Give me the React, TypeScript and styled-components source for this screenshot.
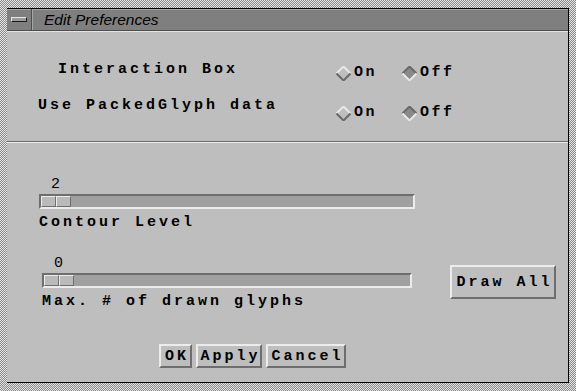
import React from 'react'
import styled, { createGlobalStyle } from 'styled-components'

const GlobalStyle = createGlobalStyle`
  html, body {
    margin: 0;
    padding: 0;
    background: #bebebe;
  }
  #root {
    width: 576px;
    height: 391px;
  }
`

const mono = `"Liberation Mono", "DejaVu Sans Mono", monospace`

const Frame = styled.div`
  box-sizing: border-box;
  width: 576px;
  height: 391px;
  padding: 8px 7px 8px 7px;
  background-color: #c0c0c0;
  background-image: repeating-conic-gradient(#8c8c8c 0 25%, #e2e2e2 0 50%);
  background-size: 2px 2px;
  display: flex;
`

const Inner = styled.div`
  flex: 1;
  display: flex;
  flex-direction: column;
  background: #bebebe;
  border-right: 1px solid #000;
  border-bottom: 1px solid #000;
  border-top: 1px solid #000;
`

const TitleBar = styled.div`
  height: 21px;
  display: flex;
  align-items: stretch;
  background: #7f7f7f;
  border-bottom: 1px solid #4e4e4e;
  box-shadow: inset 0 1px 0 #a6a6a6;
`

const MenuButton = styled.div`
  width: 24px;
  display: flex;
  align-items: center;
  justify-content: center;
  border-right: 1px solid #4e4e4e;
  box-shadow: 1px 0 0 #a6a6a6;
`

const MenuBar = styled.div`
  width: 14px;
  height: 3px;
  background: #9a9a9a;
  border-top: 1px solid #e6e6e6;
  border-bottom: 1px solid #1a1a1a;
  border-left: 1px solid #e6e6e6;
  border-right: 1px solid #1a1a1a;
`

const Title = styled.div`
  font-family: "Liberation Sans", Arial, sans-serif;
  font-style: italic;
  font-size: 15.5px;
  color: #000;
  padding-left: 12px;
  display: flex;
  align-items: center;
`

const TopSection = styled.div`
  height: 110px;
  box-sizing: border-box;
  padding-top: 29px;
  display: flex;
  flex-direction: column;
  gap: 18px;
  border-top: 1px solid #e4e4e4;
`

const Separator = styled.div`
  height: 1px;
  background: #6a6a6a;
  border-bottom: 1px solid #ececec;
`

const OptionRow = styled.div`
  display: flex;
  align-items: flex-start;
  height: 18px;
`

const Label = styled.div<{ $indent: number }>`
  box-sizing: border-box;
  width: 329px;
  padding-left: ${p => p.$indent}px;
  font-family: ${mono};
  font-weight: bold;
  font-size: 15px;
  line-height: 18px;
  letter-spacing: 3px;
  color: #000;
  white-space: nowrap;
`

const RadioGroup = styled.div<{ $drop: number }>`
  display: flex;
  margin-top: ${p => p.$drop}px;
`

const Radio = styled.div`
  width: 66px;
  display: flex;
  align-items: center;
  gap: 3px;
  font-family: ${mono};
  font-weight: bold;
  font-size: 15px;
  line-height: 18px;
  letter-spacing: 2.5px;
  color: #000;
`

const LowerSection = styled.div`
  flex: 1;
  display: flex;
  flex-direction: column;
  padding-top: 34px;
`

const SliderArea = styled.div`
  display: flex;
  align-items: flex-end;
`

const SliderColumn = styled.div`
  display: flex;
  flex-direction: column;
  gap: 24px;
`

const SliderBlock = styled.div<{ $inset: number; $width: number }>`
  display: flex;
  flex-direction: column;
  padding-left: ${p => p.$inset}px;
  width: ${p => p.$width}px;
`

const SliderValue = styled.div<{ $center: number }>`
  height: 16px;
  font-family: ${mono};
  font-size: 15px;
  line-height: 16px;
  color: #000;
  padding-left: ${p => p.$center}px;
`

const Trough = styled.div`
  box-sizing: border-box;
  margin-top: 1px;
  height: 15px;
  background: #a0a0a0;
  border-top: 2px solid #6e6e6e;
  border-left: 2px solid #6e6e6e;
  border-bottom: 2px solid #ececec;
  border-right: 2px solid #ececec;
  display: flex;
  align-items: stretch;
`

const Thumb = styled.div`
  width: 30px;
  display: flex;
  background: #bababa;
`

const ThumbHalf = styled.div`
  flex: 1;
  box-sizing: border-box;
  border-top: 1px solid #ececec;
  border-left: 1px solid #ececec;
  border-bottom: 1px solid #6e6e6e;
  border-right: 1px solid #6e6e6e;
`

const Caption = styled.div`
  margin-top: 5px;
  font-family: ${mono};
  font-weight: bold;
  font-size: 15px;
  line-height: 18px;
  letter-spacing: 3px;
  color: #000;
  white-space: nowrap;
`

const Button = styled.button<{ $w: number; $h: number }>`
  box-sizing: border-box;
  width: ${p => p.$w}px;
  height: ${p => p.$h}px;
  padding: 0 0 0 3px;
  background: #bebebe;
  border-top: 2px solid #ececec;
  border-left: 2px solid #ececec;
  border-bottom: 2px solid #6e6e6e;
  border-right: 2px solid #6e6e6e;
  font-family: ${mono};
  font-weight: bold;
  font-size: 15px;
  letter-spacing: 3px;
  color: #000;
  display: flex;
  align-items: center;
  justify-content: center;
  white-space: nowrap;
`

const DrawAllWrap = styled.div`
  margin-left: 35px;
  margin-bottom: 12px;
`

const Footer = styled.div`
  display: flex;
  gap: 4px;
  padding-left: 152px;
  margin-top: 33px;
`

const Diamond: React.FC<{ on: boolean }> = ({ on }) => (
  <svg width="15" height="15" viewBox="0 0 15 15">
    <polygon points="7.5,0.5 14.5,7.5 7.5,14.5 0.5,7.5" fill={on ? '#8a8a8a' : '#bebebe'} />
    <polyline
      points="0.5,7.5 7.5,0.5 14.5,7.5"
      fill="none"
      stroke={on ? '#6a6a6a' : '#e8e8e8'}
      strokeWidth="2"
    />
    <polyline
      points="0.5,7.5 7.5,14.5 14.5,7.5"
      fill="none"
      stroke={on ? '#e8e8e8' : '#6a6a6a'}
      strokeWidth="2"
    />
  </svg>
)

const RadioPair: React.FC<{ value: 'on' | 'off'; drop: number }> = ({ value, drop }) => (
  <RadioGroup $drop={drop}>
    <Radio>
      <Diamond on={value === 'on'} />
      On
    </Radio>
    <Radio>
      <Diamond on={value === 'off'} />
      Off
    </Radio>
  </RadioGroup>
)

const Slider: React.FC<{ value: string; caption: string; inset: number; width: number }> = ({
  value,
  caption,
  inset,
  width,
}) => (
  <SliderBlock $inset={inset} $width={width}>
    <SliderValue $center={12}>{value}</SliderValue>
    <Trough>
      <Thumb>
        <ThumbHalf />
        <ThumbHalf />
      </Thumb>
    </Trough>
    <Caption>{caption}</Caption>
  </SliderBlock>
)

export default function App() {
  return (
    <>
      <GlobalStyle />
      <Frame>
        <Inner>
          <TitleBar>
            <MenuButton>
              <MenuBar />
            </MenuButton>
            <Title>Edit Preferences</Title>
          </TitleBar>
          <TopSection>
            <OptionRow>
              <Label $indent={51}>Interaction Box</Label>
              <RadioPair value="off" drop={3} />
            </OptionRow>
            <OptionRow>
              <Label $indent={31}>Use PackedGlyph data</Label>
              <RadioPair value="off" drop={7} />
            </OptionRow>
          </TopSection>
          <Separator />
          <LowerSection>
            <SliderArea>
              <SliderColumn>
                <Slider value="2" caption="Contour Level" inset={32} width={376} />
                <Slider value="0" caption="Max. # of drawn glyphs" inset={35} width={370} />
              </SliderColumn>
              <DrawAllWrap>
                <Button $w={106} $h={34}>Draw All</Button>
              </DrawAllWrap>
            </SliderArea>
            <Footer>
              <Button $w={33} $h={24}>OK</Button>
              <Button $w={66} $h={24}>Apply</Button>
              <Button $w={80} $h={24}>Cancel</Button>
            </Footer>
          </LowerSection>
        </Inner>
      </Frame>
    </>
  )
}
